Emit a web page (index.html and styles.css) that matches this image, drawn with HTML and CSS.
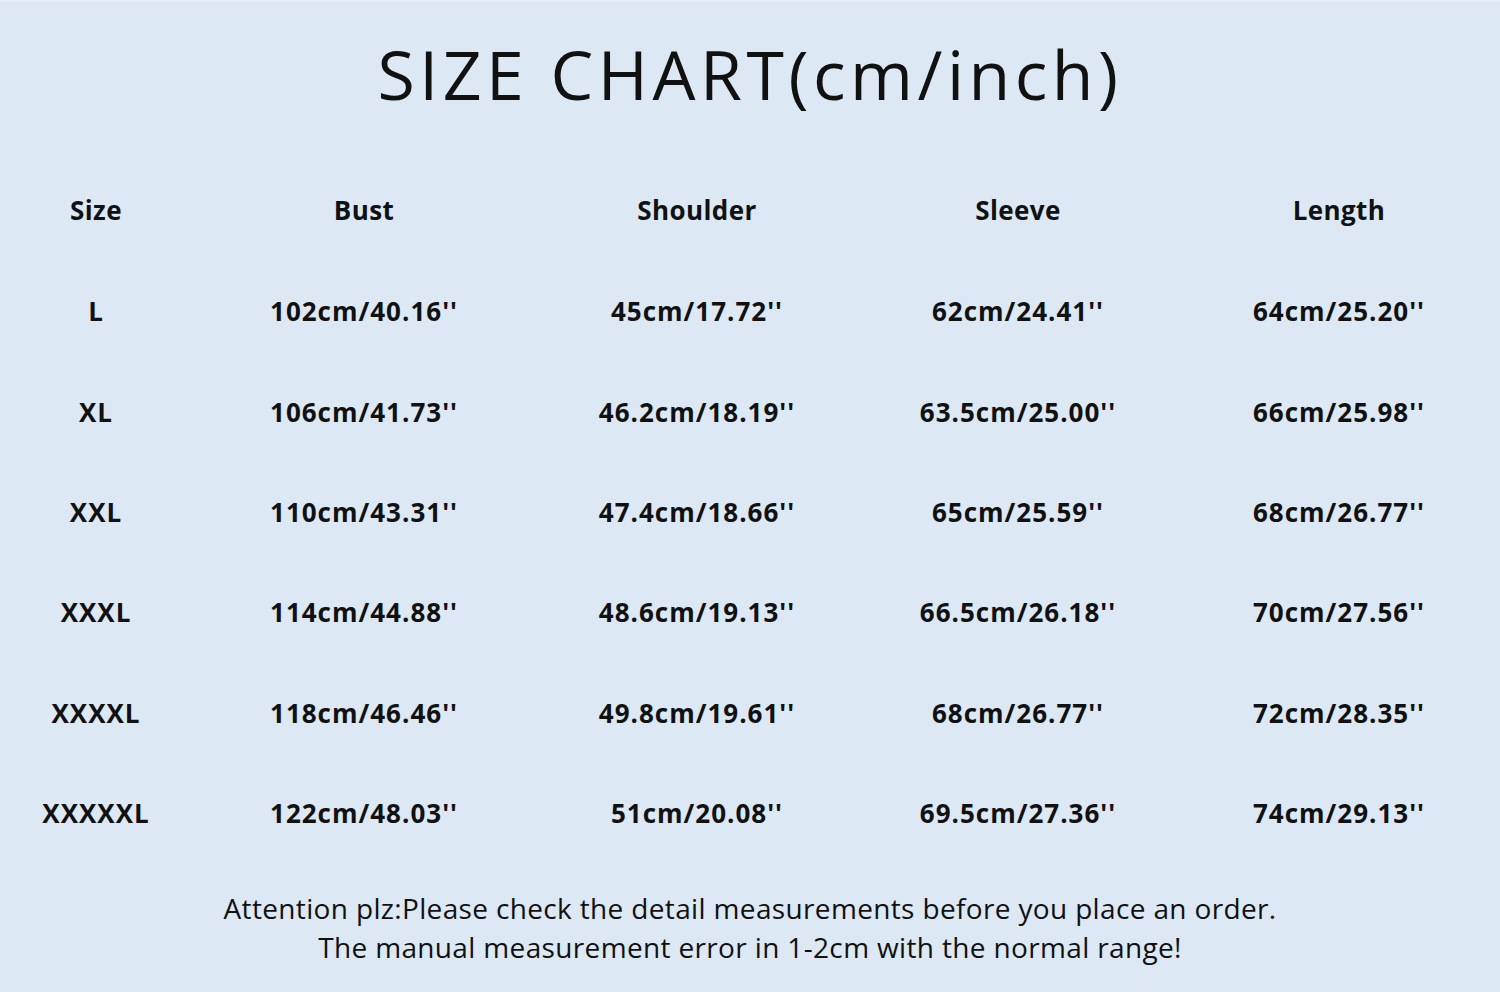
FILE: index.html
```html
<!DOCTYPE html>
<html lang="en">
<head>
<meta charset="utf-8">
<title>Size Chart</title>
<link rel="stylesheet" href="styles.css">
</head>
<body>
<main class="chart">
  <h1 class="title">SIZE CHART(cm/inch)</h1>
  <div class="table">
    <div class="cell head">Size</div><div class="cell head">Bust</div><div class="cell head">Shoulder</div><div class="cell head">Sleeve</div><div class="cell head">Length</div>
    <div class="cell">L</div><div class="cell">102cm/40.16''</div><div class="cell">45cm/17.72''</div><div class="cell">62cm/24.41''</div><div class="cell">64cm/25.20''</div>
    <div class="cell">XL</div><div class="cell">106cm/41.73''</div><div class="cell">46.2cm/18.19''</div><div class="cell">63.5cm/25.00''</div><div class="cell">66cm/25.98''</div>
    <div class="cell">XXL</div><div class="cell">110cm/43.31''</div><div class="cell">47.4cm/18.66''</div><div class="cell">65cm/25.59''</div><div class="cell">68cm/26.77''</div>
    <div class="cell">XXXL</div><div class="cell">114cm/44.88''</div><div class="cell">48.6cm/19.13''</div><div class="cell">66.5cm/26.18''</div><div class="cell">70cm/27.56''</div>
    <div class="cell">XXXXL</div><div class="cell">118cm/46.46''</div><div class="cell">49.8cm/19.61''</div><div class="cell">68cm/26.77''</div><div class="cell">72cm/28.35''</div>
    <div class="cell">XXXXXL</div><div class="cell">122cm/48.03''</div><div class="cell">51cm/20.08''</div><div class="cell">69.5cm/27.36''</div><div class="cell">74cm/29.13''</div>
  </div>
  <div class="note">
    <p>Attention plz:Please check the detail measurements before you place an order.</p>
    <p>The manual measurement error in 1-2cm with the normal range!</p>
  </div>
</main>
</body>
</html>
```
FILE: styles.css
```css
html, body {
  margin: 0;
  padding: 0;
  background: #ffffff;
}
.chart {
  box-sizing: border-box;
  width: 1500px;
  height: 992px;
  background: #dce8f4;
  border-top: 2px solid #e7eef5;
  display: flex;
  flex-direction: column;
  color: #111;
}
.title {
  margin: 0;
  height: 159px;
  display: flex;
  align-items: center;
  justify-content: center;
  padding-bottom: 16px;
  box-sizing: border-box;
  font-family: "Open Sans", sans-serif;
  font-weight: 400;
  font-size: 68px;
  letter-spacing: 4.5px;
  color: #111;
}
.table {
  display: grid;
  grid-template-columns: 192px 344px 322px 320px 322px;
  grid-auto-rows: 100.3px;
}
.cell {
  display: flex;
  align-items: center;
  justify-content: center;
  font-family: "Open Sans", sans-serif;
  font-weight: 700;
  font-size: 26px;
  letter-spacing: 1px;
  color: #111;
}
.cell.head {
  letter-spacing: 0.4px;
  padding-bottom: 2px;
}
.note {
  padding-top: 26px;
  text-align: center;
  font-family: "Open Sans", sans-serif;
  font-size: 28px;
  letter-spacing: 0.35px;
  line-height: 39px;
  color: #111;
}
.note p {
  margin: 0;
}
```
